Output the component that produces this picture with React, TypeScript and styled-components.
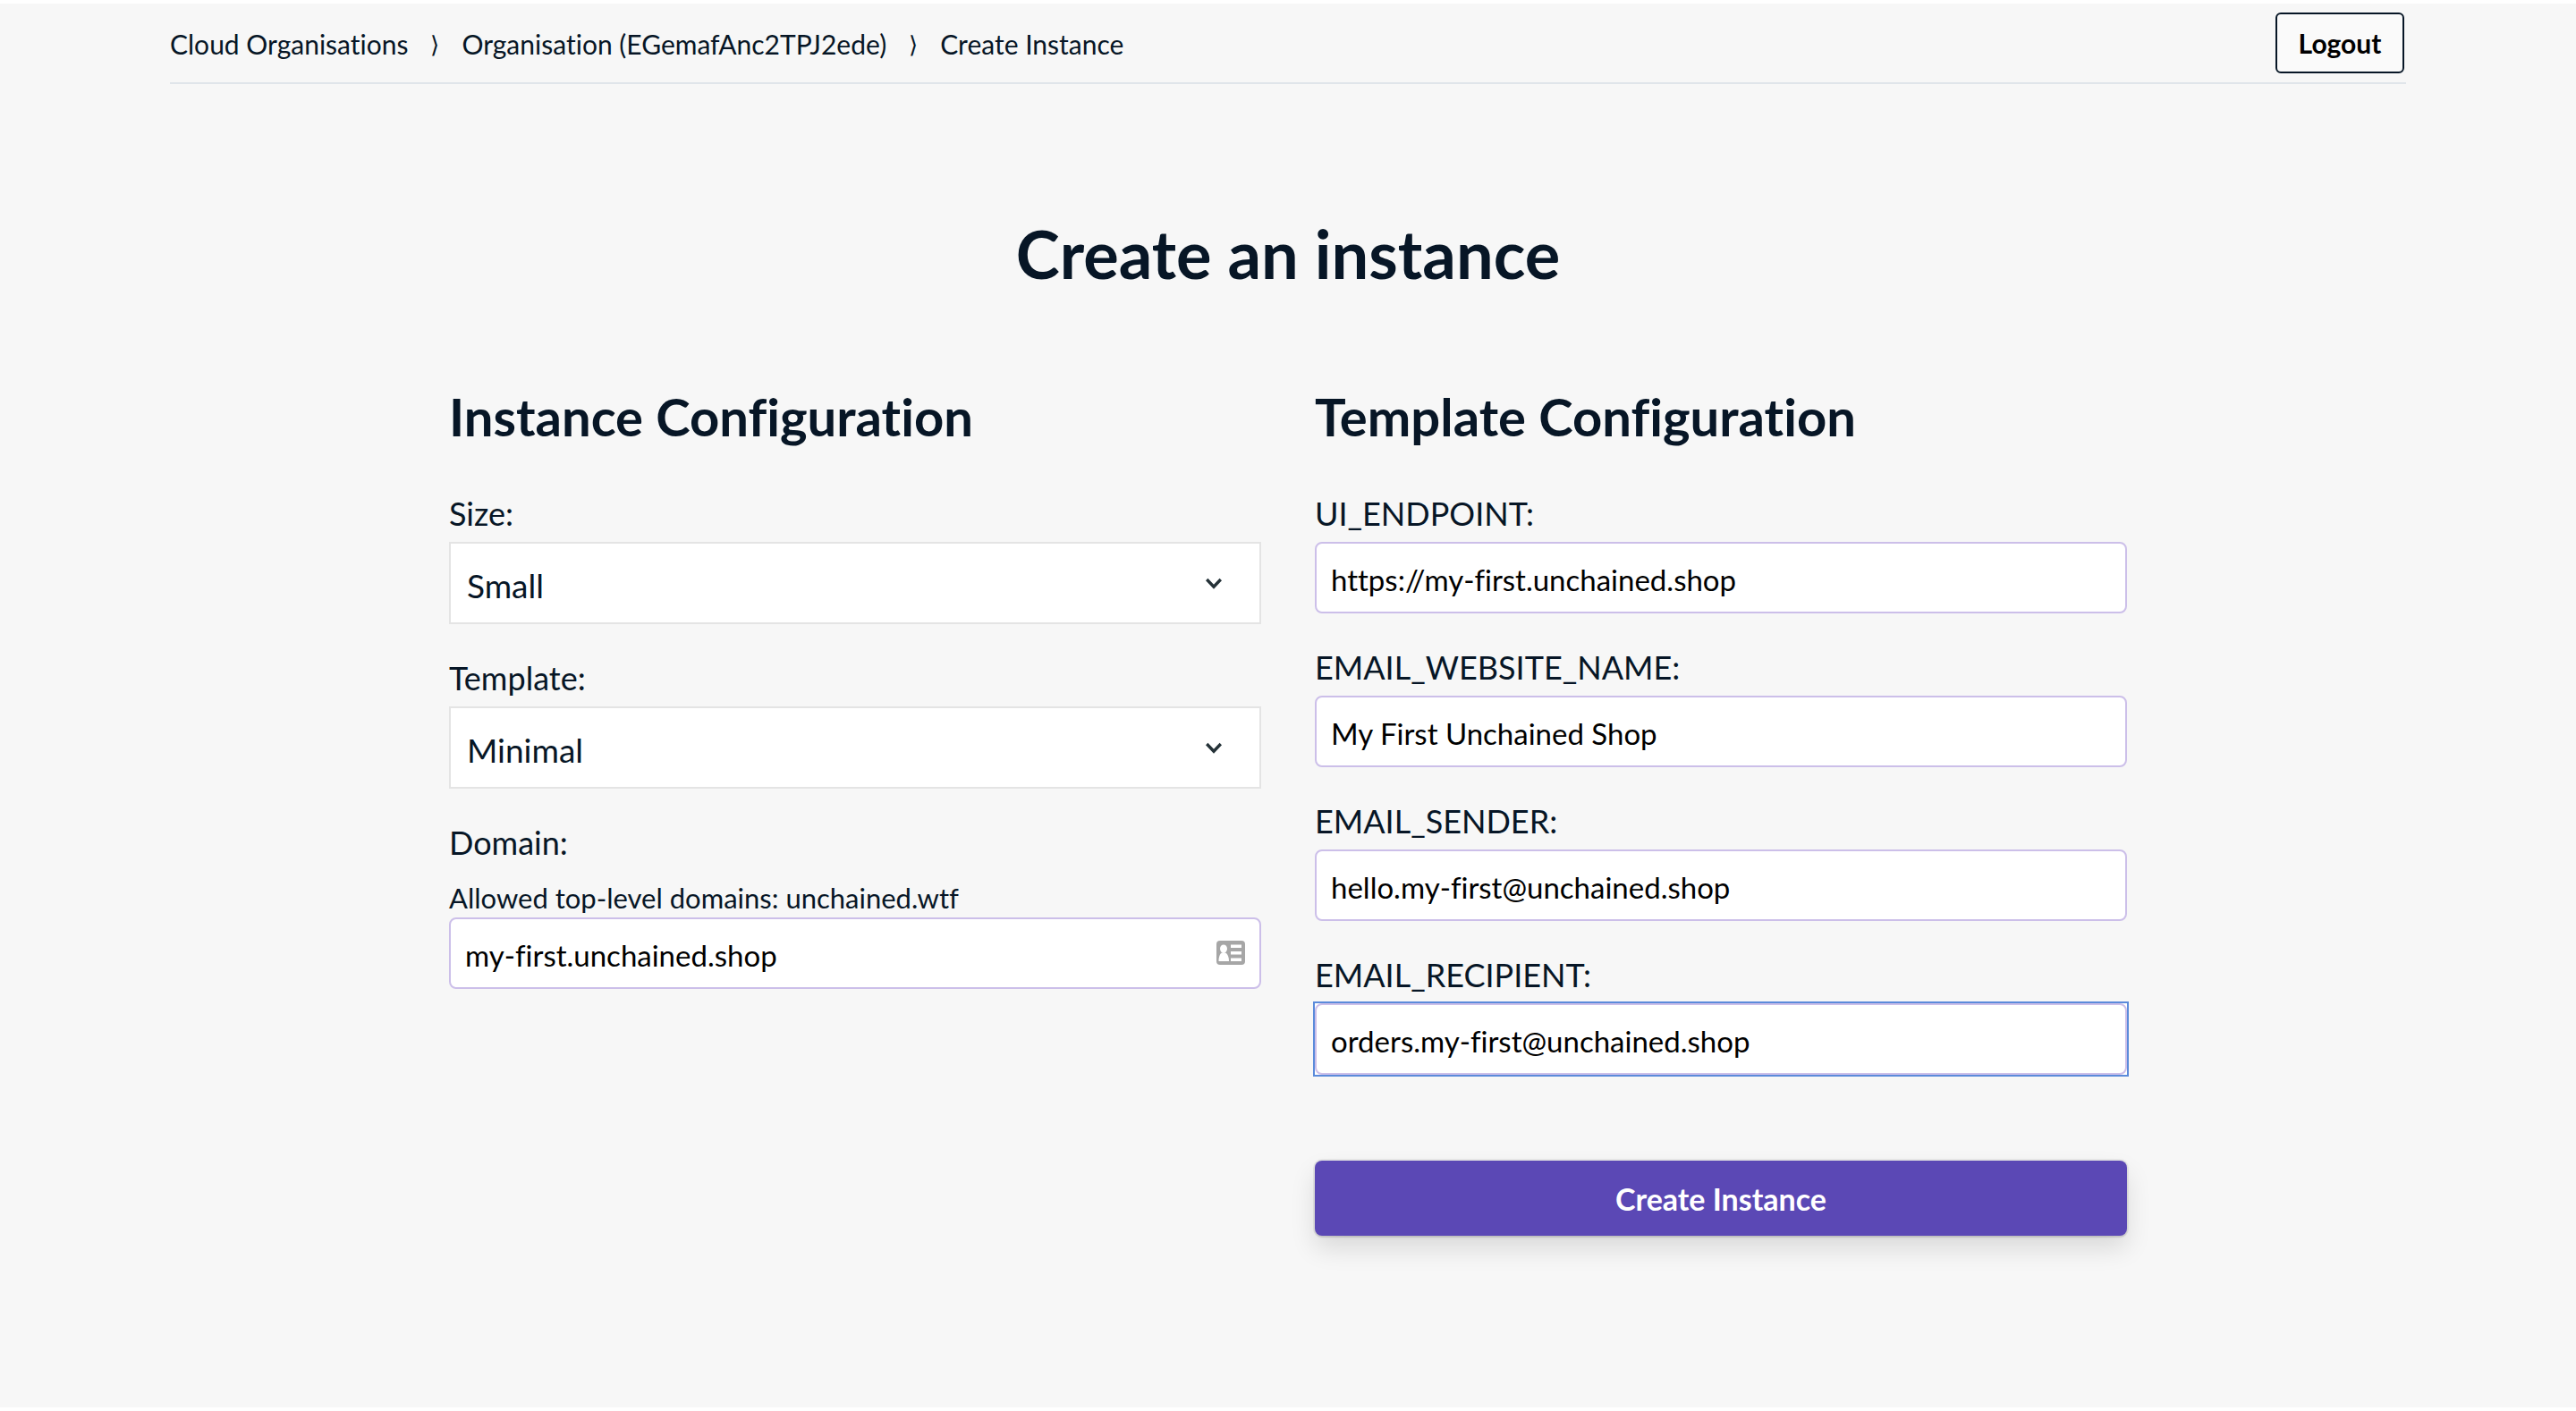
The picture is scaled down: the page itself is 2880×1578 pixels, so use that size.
import React from 'react';
import styled, { createGlobalStyle } from 'styled-components';

const GlobalStyle = createGlobalStyle`
  *, *::before, *::after { box-sizing: border-box; }
  body {
    margin: 0;
    background: #f7f7f7;
    color: #071626;
    font-family: Lato, "Open Sans", "Liberation Sans", sans-serif;
    font-variant-ligatures: none;
  }
  h1, h2, p, ol { margin: 0; padding: 0; }
  button, input, select { font-family: inherit; font-variant-ligatures: inherit; margin: 0; }
`;

const Page = styled.div`
  min-height: 100vh;
  padding: 0 40px;
  border-top: 4px solid #ffffff;
  border-bottom: 4px solid #ffffff;
`;

const Header = styled.header`
  display: flex;
  align-items: center;
  justify-content: space-between;
  max-width: 2500px;
  margin: 0 auto;
  padding: 10px 2px 10px 0;
  border-bottom: 2px solid #e0e5ea;
`;

const Crumbs = styled.ol`
  display: flex;
  align-items: center;
  padding-top: 2px;
  list-style: none;
  font-size: 30px;
  line-height: 44px;
`;

const Crumb = styled.li`
  display: flex;
  align-items: center;

  & + &::before {
    content: "⟩";
    width: 60px;
    text-align: center;
    font-size: 26px;
  }
`;

const CrumbLink = styled.a`
  color: inherit;
  text-decoration: none;
`;

const LogoutButton = styled.button`
  width: 144px;
  height: 68px;
  padding: 0;
  border: 2px solid #071626;
  border-radius: 6px;
  background: #fafafa;
  color: #000000;
  font-size: 30px;
  font-weight: 700;
`;

const Main = styled.main`
  max-width: 1876px;
  margin: 0 auto;
  padding: 146px 0 96px;
`;

const Title = styled.h1`
  margin-bottom: 104px;
  font-size: 74px;
  font-weight: 700;
  line-height: 88px;
  text-align: center;
`;

const Form = styled.form`
  display: grid;
  grid-template-columns: 1fr 1fr;
  gap: 60px;
  align-items: start;
`;

const Column = styled.section`
  display: flex;
  flex-direction: column;
  gap: 38px;
`;

const SectionTitle = styled.h2`
  margin-bottom: 14px;
  font-size: 58px;
  font-weight: 700;
  line-height: 68px;
`;

const Field = styled.div`
  display: flex;
  flex-direction: column;
`;

const Label = styled.label`
  padding-bottom: 10px;
  font-size: 36px;
  line-height: 44px;
`;

const Hint = styled.p`
  padding-top: 8px;
  font-size: 31px;
  line-height: 44px;
`;

const Control = styled.div`
  position: relative;
`;

const SelectBox = styled.select`
  display: block;
  appearance: none;
  width: 100%;
  height: 92px;
  padding: 4px 80px 0 18px;
  border: 2px solid #e4e4e4;
  border-radius: 0;
  background: #ffffff;
  color: #071626;
  font-size: 37px;
`;

const TextBox = styled.input`
  display: block;
  width: 100%;
  height: 80px;
  padding: 4px 16px 0;
  border: 2px solid #ccbfe9;
  border-radius: 8px;
  background: #ffffff;
  color: #000000;
  font-size: 33px;
  outline: none;
`;

const FocusRing = styled.div<{ $active?: boolean }>`
  background: ${(p) => (p.$active ? '#ffffff' : 'transparent')};
  box-shadow: ${(p) => (p.$active ? '0 0 0 2px #5b8bdb' : 'none')};
`;

const Chevron = styled.svg`
  position: absolute;
  top: 40px;
  right: 44px;
  width: 18px;
  height: 14px;
  pointer-events: none;
`;

const CardIcon = styled.svg`
  position: absolute;
  top: 26px;
  right: 18px;
  width: 32px;
  height: 28px;
  pointer-events: none;
`;

const SubmitButton = styled.button`
  height: 84px;
  margin-top: 58px;
  border: 0;
  border-radius: 8px;
  background: #5b48b5;
  color: #ffffff;
  font-size: 34px;
  font-weight: 700;
  box-shadow:
    0 0 0 2px rgba(0, 0, 0, 0.06),
    0 2px 2px rgba(0, 0, 0, 0.08),
    0 14px 28px rgba(0, 0, 0, 0.12);
`;

function SelectField({ id, label, options }: { id: string; label: string; options: string[] }) {
  return (
    <Field>
      <Label htmlFor={id}>{label}</Label>
      <Control>
        <SelectBox id={id} defaultValue={options[0]}>
          {options.map((o) => (
            <option key={o}>{o}</option>
          ))}
        </SelectBox>
        <Chevron viewBox="0 0 18 14" aria-hidden="true">
          <path d="M1.2 2 L9 10.2 L16.8 2" fill="none" stroke="#253238" strokeWidth="3.4" />
        </Chevron>
      </Control>
    </Field>
  );
}

function TextField({ id, label, value, active }: { id: string; label: string; value: string; active?: boolean }) {
  return (
    <Field>
      <Label htmlFor={id}>{label}</Label>
      <FocusRing $active={active}>
        <TextBox id={id} type="text" defaultValue={value} />
      </FocusRing>
    </Field>
  );
}

export default function App() {
  return (
    <>
      <GlobalStyle />
      <Page>
        <Header>
          <nav aria-label="Breadcrumb">
            <Crumbs>
              <Crumb><CrumbLink href="#organisations">Cloud Organisations</CrumbLink></Crumb>
              <Crumb><CrumbLink href="#organisation">Organisation (EGemafAnc2TPJ2ede)</CrumbLink></Crumb>
              <Crumb><CrumbLink href="#create">Create Instance</CrumbLink></Crumb>
            </Crumbs>
          </nav>
          <LogoutButton type="button">Logout</LogoutButton>
        </Header>
        <Main>
          <Title>Create an instance</Title>
          <Form onSubmit={(e) => e.preventDefault()}>
            <Column>
              <SectionTitle>Instance Configuration</SectionTitle>
              <SelectField id="size" label="Size:" options={['Small']} />
              <SelectField id="template" label="Template:" options={['Minimal']} />
              <Field>
                <Label htmlFor="domain">Domain:</Label>
                <Hint id="domain-hint">Allowed top-level domains: unchained.wtf</Hint>
                <Control>
                  <TextBox id="domain" type="text" defaultValue="my-first.unchained.shop" aria-describedby="domain-hint" />
                  <CardIcon viewBox="0 0 32 28" aria-hidden="true">
                    <rect width="32" height="27" rx="4" fill="#a6a6a6" />
                    <g fill="#ffffff">
                      <ellipse cx="8" cy="9" rx="4" ry="4.5" />
                      <path d="M2.5 23 C2.5 17 4.5 13 8 13 C11.5 13 14 17 14 23 Z" />
                      <rect x="16" y="4.5" width="12" height="3.5" />
                      <rect x="16" y="12" width="12" height="3.5" />
                      <rect x="16" y="19.5" width="12" height="3.5" />
                    </g>
                  </CardIcon>
                </Control>
              </Field>
            </Column>
            <Column>
              <SectionTitle>Template Configuration</SectionTitle>
              <TextField id="ui-endpoint" label="UI_ENDPOINT:" value="https://my-first.unchained.shop" />
              <TextField id="website-name" label="EMAIL_WEBSITE_NAME:" value="My First Unchained Shop" />
              <TextField id="sender" label="EMAIL_SENDER:" value="hello.my-first@unchained.shop" />
              <TextField id="recipient" label="EMAIL_RECIPIENT:" value="orders.my-first@unchained.shop" active />
              <SubmitButton type="submit">Create Instance</SubmitButton>
            </Column>
          </Form>
        </Main>
      </Page>
    </>
  );
}
